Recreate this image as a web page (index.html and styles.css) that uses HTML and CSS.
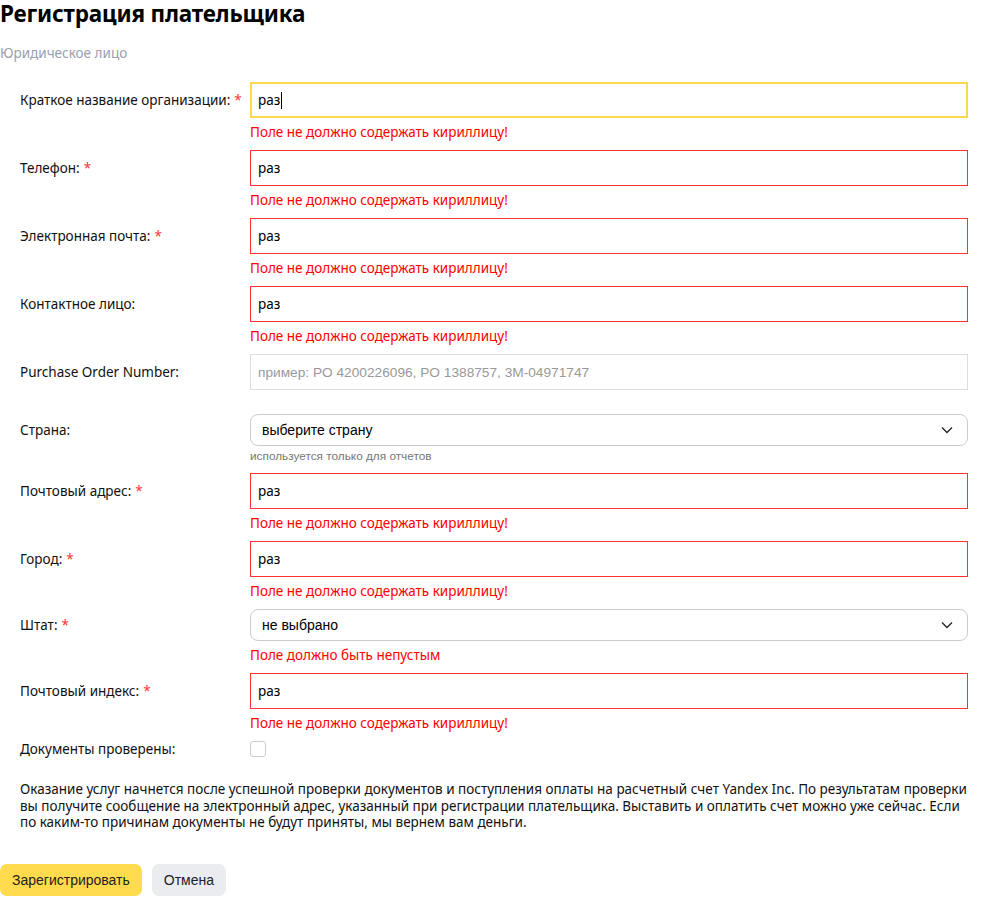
FILE: index.html
```html
<!DOCTYPE html>
<html lang="ru">
<head>
<meta charset="utf-8">
<title>Регистрация плательщика</title>
<link rel="stylesheet" href="styles.css">
</head>
<body>
<h1 class="title">Регистрация плательщика</h1>
<div class="subtitle">Юридическое лицо</div>

<form class="form">
  <div class="row">
    <div class="label">Краткое название организации:<span class="req">*</span></div>
    <div class="field">
      <div class="input focus">раз<span class="caret"></span></div>
      <div class="err">Поле не должно содержать кириллицу!</div>
    </div>
  </div>
  <div class="row">
    <div class="label">Телефон:<span class="req">*</span></div>
    <div class="field">
      <div class="input invalid">раз</div>
      <div class="err">Поле не должно содержать кириллицу!</div>
    </div>
  </div>
  <div class="row">
    <div class="label">Электронная почта:<span class="req">*</span></div>
    <div class="field">
      <div class="input invalid">раз</div>
      <div class="err">Поле не должно содержать кириллицу!</div>
    </div>
  </div>
  <div class="row">
    <div class="label">Контактное лицо:</div>
    <div class="field">
      <div class="input invalid">раз</div>
      <div class="err">Поле не должно содержать кириллицу!</div>
    </div>
  </div>
  <div class="row row-plain">
    <div class="label">Purchase Order Number:</div>
    <div class="field">
      <div class="input plain placeholder">пример: PO 4200226096, PO 1388757, 3M-04971747</div>
    </div>
  </div>
  <div class="row row-select">
    <div class="label">Страна:</div>
    <div class="field">
      <div class="select">выберите страну<svg class="chev" width="12" height="8" viewBox="0 0 12 8"><path d="M1 1.5l5 5 5-5" fill="none" stroke="#222" stroke-width="1.3"/></svg></div>
      <div class="hint">используется только для отчетов</div>
    </div>
  </div>
  <div class="row">
    <div class="label">Почтовый адрес:<span class="req">*</span></div>
    <div class="field">
      <div class="input invalid">раз</div>
      <div class="err">Поле не должно содержать кириллицу!</div>
    </div>
  </div>
  <div class="row">
    <div class="label">Город:<span class="req">*</span></div>
    <div class="field">
      <div class="input invalid">раз</div>
      <div class="err">Поле не должно содержать кириллицу!</div>
    </div>
  </div>
  <div class="row row-select">
    <div class="label">Штат:<span class="req">*</span></div>
    <div class="field">
      <div class="select">не выбрано<svg class="chev" width="12" height="8" viewBox="0 0 12 8"><path d="M1 1.5l5 5 5-5" fill="none" stroke="#222" stroke-width="1.3"/></svg></div>
      <div class="err">Поле должно быть непустым</div>
    </div>
  </div>
  <div class="row">
    <div class="label">Почтовый индекс:<span class="req">*</span></div>
    <div class="field">
      <div class="input invalid">раз</div>
      <div class="err">Поле не должно содержать кириллицу!</div>
    </div>
  </div>
  <div class="row row-check">
    <div class="label">Документы проверены:</div>
    <div class="field">
      <span class="checkbox"></span>
    </div>
  </div>

  <p class="note">Оказание услуг начнется после успешной проверки документов и поступления оплаты на расчетный счет Yandex Inc. По результатам проверки вы получите сообщение на электронный адрес, указанный при регистрации плательщика. Выставить и оплатить счет можно уже сейчас. Если по каким-то причинам документы не будут приняты, мы вернем вам деньги.</p>
</form>

<div class="actions">
  <button class="btn btn-primary" type="button">Зарегистрировать</button>
  <button class="btn btn-secondary" type="button">Отмена</button>
</div>
</body>
</html>
```

FILE: styles.css
```css
html, body {
  margin: 0;
  padding: 0;
  background: #fff;
}

body {
  font-family: "Noto Sans", "Open Sans", sans-serif;
  color: #000;
  font-size: 13.5px;
}

.title {
  margin: 0;
  font-size: 22.5px;
  line-height: 28px;
  font-weight: 700;
  letter-spacing: -0.2px;
}

.subtitle {
  margin-top: 16px;
  font-size: 13.5px;
  line-height: 18px;
  color: #9aa0af;
}

.form {
  margin-top: 20px;
  padding-left: 20px;
}

.row {
  display: grid;
  grid-template-columns: 230px 718px;
}

.label {
  height: 36px;
  display: flex;
  align-items: center;
  font-size: 13.5px;
  color: #111;
}

.req {
  color: #f33;
  margin-left: 4px;
}

.row-select .label {
  height: 32px;
}

.row-check .label {
  height: 16px;
}

.input {
  box-sizing: border-box;
  height: 36px;
  border: 1px solid #ddd;
  padding: 0 7px;
  display: flex;
  align-items: center;
  font-size: 13.5px;
  color: #000;
}

.input.focus {
  border: 2px solid #fcd94c;
  padding: 0 6px;
}

.caret {
  display: inline-block;
  width: 1px;
  height: 17px;
  background: #000;
  margin-left: 1px;
}

.input.invalid {
  border-color: #f33;
}

.input.placeholder {
  font-family: "Liberation Sans", Arial, sans-serif;
  font-size: 13.7px;
  color: #999;
}

.row-plain {
  margin-bottom: 24px;
}

.err {
  margin-top: 5px;
  margin-bottom: 9px;
  line-height: 18px;
  color: #f00;
  font-size: 13.5px;
}

.select {
  box-sizing: border-box;
  height: 32px;
  border: 1px solid #ccc;
  border-radius: 8px;
  padding: 0 14px 0 11px;
  display: flex;
  align-items: center;
  justify-content: space-between;
  font-family: "Liberation Sans", Arial, sans-serif;
  font-size: 14px;
  color: #000;
}

.chev {
  display: block;
}

.hint {
  margin-top: 4px;
  margin-bottom: 10px;
  font-family: "Liberation Sans", Arial, sans-serif;
  font-size: 11.8px;
  line-height: 13px;
  color: #777;
}

.checkbox {
  display: block;
  box-sizing: border-box;
  width: 16px;
  height: 16px;
  border: 1px solid #ccc;
  border-radius: 3px;
}

.note {
  margin: 24px 0 0;
  width: 948px;
  font-size: 13.5px;
  line-height: 16.5px;
  color: #111;
}

.actions {
  margin-top: 33px;
  display: flex;
  gap: 10px;
}

.btn {
  height: 32px;
  border: 0;
  border-radius: 7px;
  padding: 0 12px;
  font-family: "Liberation Sans", Arial, sans-serif;
  font-size: 14px;
  color: #222;
  cursor: pointer;
}

.btn-primary {
  background: #ffdb4d;
}

.btn-secondary {
  background: #ebecf0;
}
```
